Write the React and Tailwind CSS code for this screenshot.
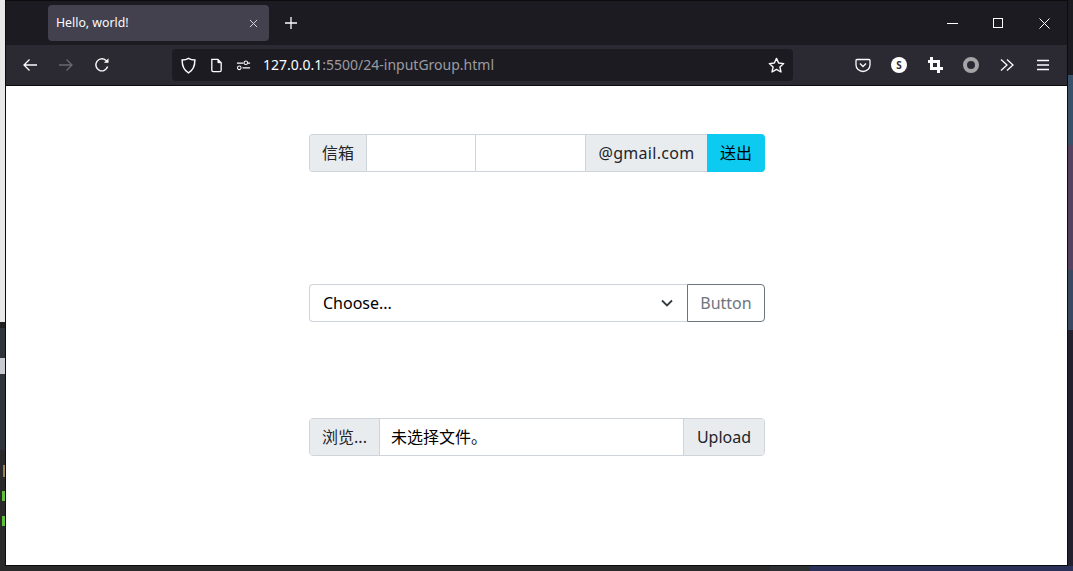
import React from "react";

const ui = { fontFamily: '"Noto Sans","Noto Sans CJK SC",sans-serif' };

function Icon({ children, className = "text-[#fbfbfe]", size = 16, box = 16 }) {
  return (
    <svg width={size} height={size} viewBox={`0 0 ${box} ${box}`} fill="none" stroke="currentColor" strokeWidth="1.3" className={`shrink-0 ${className}`}>
      {children}
    </svg>
  );
}

function Back({ className }) {
  return <Icon className={className}><path d="M15 8H2M7.5 2.5 2 8l5.5 5.5" /></Icon>;
}
function Forward({ className }) {
  return <Icon className={className}><path d="M1 8h13M8.5 2.5 14 8l-5.5 5.5" /></Icon>;
}

function Toolbar() {
  return (
    <div className="h-[40px] bg-[#2b2a33] flex items-center border-b border-b-[#0c0c0d] box-content">
      <div className="w-[166px] flex items-center pl-[16px] gap-[20px] shrink-0">
        <Back />
        <Forward className="text-[#696870]" />
        <Icon>
          <path d="M13.6 9.5A6 6 0 1 1 11.8 3.3L14 5" strokeWidth="1.4" />
          <path d="M14.5 1.2v4.6H9.9z" fill="currentColor" stroke="none" />
        </Icon>
      </div>
      <div className="w-[621px] h-[32px] bg-[#1c1b22] rounded-[4px] flex items-center pl-[8px] pr-[8px] shrink-0">
        <Icon size={17}>
          <path d="M8 1.2c2 1.2 4 1.6 6 1.7 0 5.5-1.600 9.700-6 12-4.400-2.300-6-6.500-6-12 2-.1 4-.5 6-1.700z" strokeWidth="1.4" />
        </Icon>
        <Icon className="text-[#fbfbfe] ml-[12px]" size={15}>
          <path d="M3 1.500h6.500L13 5v8a1.500 1.500 0 0 1-1.500 1.500h-7A1.500 1.500 0 0 1 3 13z" strokeWidth="1.4" />
          <path d="M9.500 1.500V5H13" fill="currentColor" strokeWidth="1" />
        </Icon>
        <Icon className="text-[#fbfbfe] ml-[12px]" size={15}>
          <path d="M1 5.500h7M12.500 5.500H15M7 10.500h8" strokeWidth="1.200" />
          <circle cx="10.500" cy="5" r="1.900" strokeWidth="1.100" />
          <circle cx="3.500" cy="10.500" r="1.900" strokeWidth="1.100" />
        </Icon>
        <div className="ml-[12px] text-[14px] whitespace-nowrap mt-[-1px]" style={ui}>
          <span className="text-[#fbfbfe]">127.0.0.1</span>
          <span className="text-[#9b9ba0]">:5500/24-inputGroup.html</span>
        </div>
        <div className="flex-1" />
        <Icon size={17}>
          <path d="M8 1.300 10 5.700l4.800.5-3.600 3.200 1 4.700L8 11.700l-4.200 2.400 1-4.700L1.200 6.200 6 5.700z" strokeWidth="1.300" strokeLinejoin="round" />
        </Icon>
      </div>
      <div className="flex items-center flex-1 pl-[62px] gap-[20px]">
        <Icon>
          <path d="M2 2.500h12a1 1 0 0 1 1 1V8a7 6.500 0 0 1-14 0V3.500a1 1 0 0 1 1-1z" strokeWidth="1.300" />
          <path d="M5 6.500 8 9.500l3-3" strokeWidth="1.400" />
        </Icon>
        <div className="w-[16px] h-[16px] rounded-full bg-white text-[#2b2a33] flex items-center justify-center text-[10px] font-bold leading-none shrink-0" style={ui}>S</div>
        <Icon>
          <path d="M4.500 0v11.500H16M1 4.500h10.500V16" strokeWidth="3" />
        </Icon>
        <div className="w-[16px] h-[16px] rounded-full border-[4px] border-[#a5a5a8] bg-transparent shrink-0" />
        <Icon>
          <path d="M2 2.500 8 8l-6 5.500M8 2.500 14 8l-6 5.500" strokeWidth="1.300" />
        </Icon>
        <Icon>
          <path d="M2 3.500h12M2 8h12M2 12.500h12" strokeWidth="1.400" />
        </Icon>
      </div>
    </div>
  );
}

function TitleBar() {
  return (
    <div className="h-[44px] bg-[#1c1b22] flex items-center shrink-0">
      <div className="ml-[42px] w-[221px] h-[36px] bg-[#42414d] rounded-[4px] flex items-center justify-between pl-[8px] pr-[11px]">
        <span className="text-[12.300px] text-[#fbfbfe]" style={ui}>Hello, world!</span>
        <svg width="9" height="9" viewBox="0 0 10 10" stroke="#d8d8dc" strokeWidth="1.100"><path d="M1 1l8 8M9 1 1 9" /></svg>
      </div>
      <svg className="ml-[16px]" width="12" height="12" viewBox="0 0 12 12" stroke="#fbfbfe" strokeWidth="1.300"><path d="M6 0v12M0 6h12" /></svg>
      <div className="flex-1" />
      <div className="flex items-center">
        <div className="w-[46px] flex justify-center"><svg width="11" height="11" viewBox="0 0 11 11" stroke="#fff"><path d="M0 5.500h11" /></svg></div>
        <div className="w-[46px] flex justify-center"><div className="w-[10px] h-[10px] border border-white" /></div>
        <div className="w-[46px] flex justify-center"><svg width="11" height="11" viewBox="0 0 11 11" stroke="#fff"><path d="M.5.500l10 10M10.500.500l-10 10" /></svg></div>
      </div>
    </div>
  );
}

const addon = "h-full flex items-center justify-center bg-[#e9ecef] text-[#212529] shrink-0";

function Page() {
  return (
    <div className="flex-1 bg-white flex flex-col items-center text-[16px] leading-[24px] text-[#212529] pt-[48px]" style={ui}>
      <div className="w-[456px] h-[38px] flex ml-[1px]">
        <div className="flex-1 min-w-0 flex rounded-l-[4px] border border-r-0 border-[#ced4da] overflow-hidden">
          <div className={`${addon} w-[57px] border-r border-[#ced4da]`}>信箱</div>
          <input aria-label="a" className="w-[109px] h-full bg-white border-r border-[#ced4da] outline-none shrink-0" />
          <input aria-label="b" className="w-[110px] h-full bg-white border-r border-[#ced4da] outline-none shrink-0" />
          <div className={`${addon} flex-1 tracking-[0.3px]`}>@gmail.com</div>
        </div>
        <div className="w-[58px] h-full flex items-center justify-center bg-[#0dcaf0] text-black shrink-0 rounded-r-[4px]">送出</div>
      </div>
      <div className="w-[456px] h-[38px] flex mt-[112px] ml-[1px]">
        <div className="flex-1 flex items-center justify-between rounded-l-[4px] border border-r-0 border-[#ced4da] pl-[13px] pr-[14px] text-black">
          <span>Choose...</span>
          <svg width="12" height="8" viewBox="0 0 12 8" fill="none" stroke="#343a40" strokeWidth="1.800"><path d="M1 1.500 6 6.500l5-5" /></svg>
        </div>
        <div className="w-[78px] flex items-center justify-center rounded-r-[4px] border border-[#6c757d] text-[#6c757d]">Button</div>
      </div>
      <div className="w-[456px] h-[38px] flex rounded-[4px] border border-[#ced4da] overflow-hidden mt-[96px] ml-[1px]">
        <div className={`${addon} w-[70px] border-r border-[#ced4da]`}>浏览...</div>
        <div className="flex-1 flex items-center pl-[11px] text-black">未选择文件。</div>
        <div className={`${addon} w-[81px] border-l border-[#ced4da]`}>Upload</div>
      </div>
    </div>
  );
}

export default function App() {
  return (
    <div className="w-[1073px] h-[571px] overflow-hidden flex flex-col bg-[#2a2a2a]">
      <div className="flex h-[566px]">
        <div className="w-[5px] flex flex-col shrink-0">
          <div className="h-[322px] bg-[#e8e8e8]" />
          <div className="h-[6px] bg-[#202020]" />
          <div className="h-[30px] bg-[#2f343b]" />
          <div className="h-[16px] bg-[#c8ccd0]" />
          <div className="h-[76px] bg-[#2f343b]" />
          <div className="flex-1 bg-[#2a2a2a] flex flex-col">
            <div className="mt-[15px] h-[12px] w-[2px] ml-[3px] bg-[#a08050]" />
            <div className="mt-[14px] h-[10px] w-[3px] ml-[2px] bg-[#5fc13a]" />
            <div className="mt-[15px] h-[10px] w-[3px] ml-[2px] bg-[#5fc13a]" />
          </div>
        </div>
        <div className="flex-1 flex flex-col border border-[#0c0c0d] min-w-0">
          <TitleBar />
          <Toolbar />
          <Page />
        </div>
        <div className="w-[5px] flex flex-col shrink-0">
          <div className="h-[75px] bg-[#1b1b22]" />
          <div className="h-[70px] bg-[#3a5068]" />
          <div className="h-[125px] bg-[#54425f]" />
          <div className="h-[60px] bg-[#3b4862]" />
          <div className="flex-1 bg-[#252030]" />
        </div>
      </div>
      <div className="flex-1 flex">
        <div className="w-[770px] bg-[#2a2a2a]" />
        <div className="w-[40px] bg-[#2d3033]" />
        <div className="flex-1 bg-[#2a3058]" />
      </div>
    </div>
  );
}
